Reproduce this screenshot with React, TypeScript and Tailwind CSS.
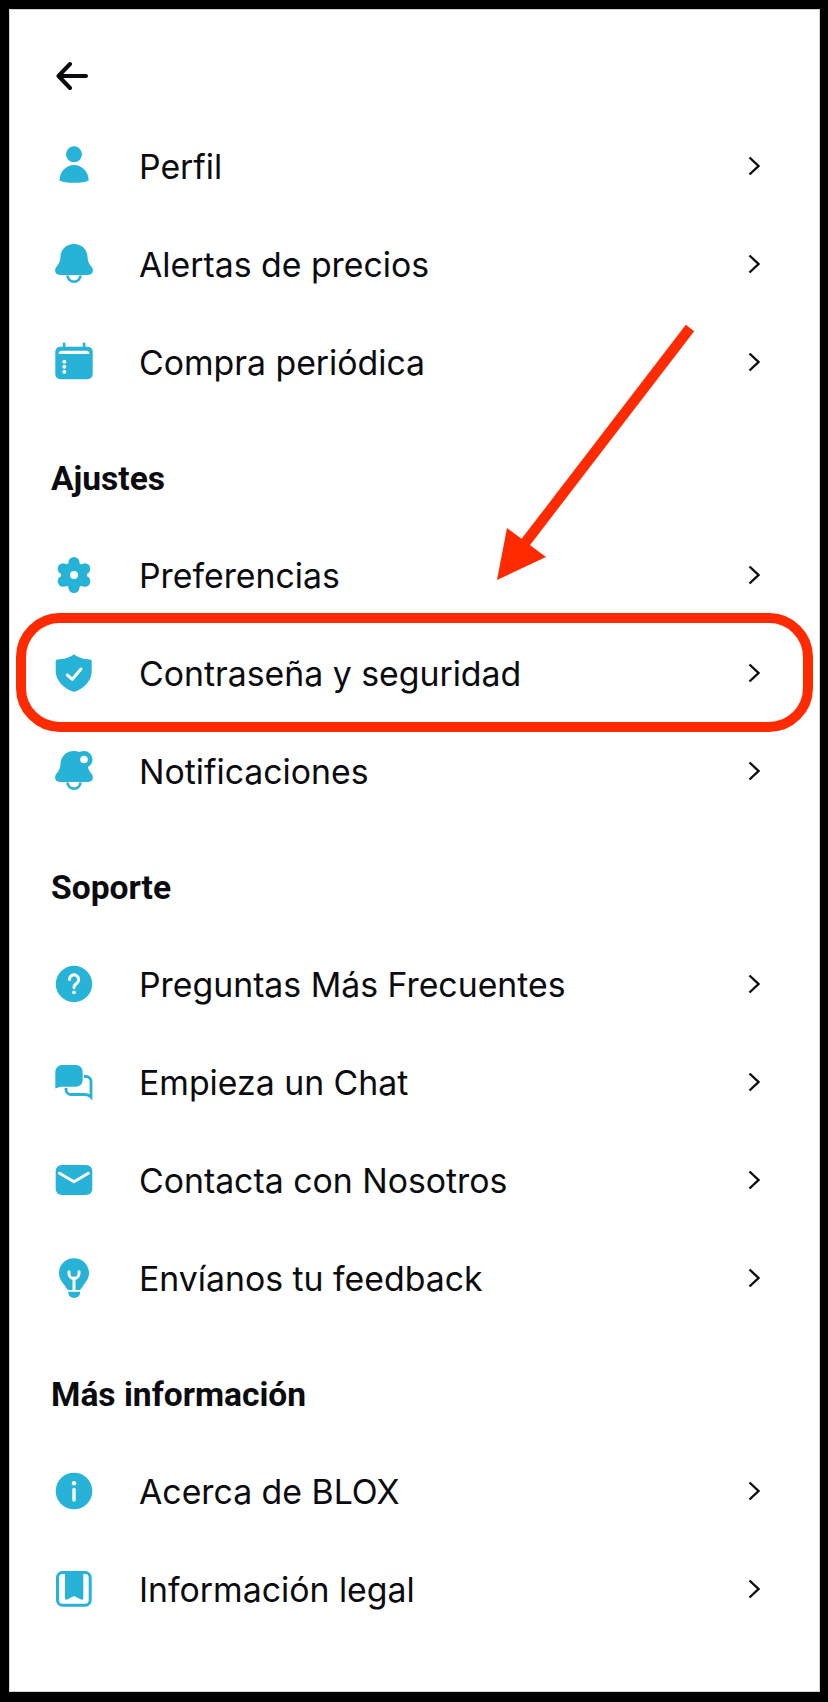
import React from 'react';

const BLUE = '#27b2d8';

const Bell = () => (
  <path d="M20 0C28 0 33 5.5 33.5 12.5C33.8 17 34.5 19 37 22C40.5 26 39 31 34 31L6 31C1 31 -0.5 26 3 22C5.5 19 6.2 17 6.5 12.5C7 5.5 12 0 20 0Z" fill={BLUE} />
);

const Clapper = () => (
  <path d="M13.5 31.5a6.5 6.2 0 0 0 13 0" fill="none" stroke={BLUE} strokeWidth="2.6" />
);

const gearLobes = [
  [20, 7.5],
  [30.8, 13.75],
  [30.8, 26.25],
  [20, 32.5],
  [9.2, 26.25],
  [9.2, 13.75],
];

const icons: Record<string, React.ReactNode> = {
  user: (
    <>
      <circle cx="20" cy="8.3" r="8" fill={BLUE} />
      <path d="M5.5 34.5C5.5 26 12 19 20 19S34.7 26 34.7 34.5C30 37.6 10 37.6 5.5 34.5Z" fill={BLUE} />
    </>
  ),
  bell: (
    <>
      <Bell />
      <Clapper />
    </>
  ),
  calendar: (
    <>
      <rect x="1.3" y="4.7" width="37.4" height="32.6" rx="5" fill={BLUE} />
      <rect x="8.8" y="0.7" width="2.6" height="6" fill={BLUE} />
      <rect x="28.8" y="0.7" width="2.6" height="6" fill={BLUE} />
      <path d="M4.7 12V11.5Q4.7 8.7 7.5 8.7H32.5Q35.3 8.7 35.3 11.5V12Z" fill="white" />
      <circle cx="10.3" cy="19.7" r="2" fill="white" />
      <circle cx="10.3" cy="24.7" r="2" fill="white" />
      <circle cx="10.3" cy="29.7" r="2" fill="white" />
    </>
  ),
  gear: (
    <>
      {gearLobes.map(([cx, cy]) => (
        <circle key={`${cx}-${cy}`} cx={cx} cy={cy} r="5.5" fill={BLUE} />
      ))}
      <circle cx="20" cy="20" r="13" fill={BLUE} />
      <circle cx="20" cy="20" r="4" fill="white" />
    </>
  ),
  shield: (
    <>
      <path d="M20 1.3C24 4.5 30 6.5 36 6.5Q37.7 6.5 37.7 8.5L37.7 18C37.7 28 30 35.5 20 39C10 35.5 1.7 28 1.7 18L1.7 8.5Q1.7 6.5 3.5 6.5C10 6.5 16 4.5 20 1.3Z" fill={BLUE} />
      <path d="M13.3 22L18.3 26.3L27 16" fill="none" stroke="white" strokeWidth="3" strokeLinecap="round" strokeLinejoin="round" />
    </>
  ),
  bellDot: (
    <>
      <Bell />
      <Clapper />
      <circle cx="30" cy="8.5" r="8.5" fill={BLUE} />
      <circle cx="30" cy="8.5" r="3.8" fill="white" />
    </>
  ),
  question: (
    <>
      <circle cx="20" cy="20" r="18.2" fill={BLUE} />
      <path d="M15.5 15.5a4.6 4.6 0 1 1 7.3 3.7c-1.7 1.2-2.8 2.2-2.8 4.3" fill="none" stroke="white" strokeWidth="3" strokeLinecap="round" />
      <circle cx="20" cy="28.3" r="1.9" fill="white" />
    </>
  ),
  chat: (
    <>
      <path d="M8 3H22A6.7 6.7 0 0 1 28.7 9.7V18A6.7 6.7 0 0 1 22 24.7H10C7 24.7 4 25 1.3 26.5V9.7A6.7 6.7 0 0 1 8 3Z" fill={BLUE} />
      <path d="M30 14.5H32A5 5 0 0 1 37 19.5V35C35 33 33 32.5 31 32.5H17A5 5 0 0 1 12 27.5V26" fill="none" stroke={BLUE} strokeWidth="2.8" />
    </>
  ),
  mail: (
    <>
      <rect x="1.7" y="5" width="36.6" height="30" rx="6" fill={BLUE} />
      <path d="M5.5 13.3L20 21.7L34.3 13.3" fill="none" stroke="white" strokeWidth="3" strokeLinecap="round" strokeLinejoin="round" />
    </>
  ),
  bulb: (
    <>
      <path d="M20 0.3C28.5 0.3 35 7 35 15C35 21 31.5 24 29 28C27.5 30.5 27 31 26 32H14C13 31 12.5 30.5 11 28C8.5 24 5 21 5 15C5 7 11.5 0.3 20 0.3Z" fill={BLUE} />
      <path d="M14.3 33.8H26V35A5.8 5 0 0 1 14.3 35Z" fill={BLUE} />
      <path d="M15 13.7V15.5A5 5 0 0 0 20 20.5A5 5 0 0 0 25 15.5V13.7M20 20V32" fill="none" stroke="white" strokeWidth="3" strokeLinecap="round" />
    </>
  ),
  info: (
    <>
      <circle cx="20" cy="20" r="18.3" fill={BLUE} />
      <circle cx="20" cy="12.3" r="2.2" fill="white" />
      <path d="M20 18.5V29" stroke="white" strokeWidth="3.4" strokeLinecap="round" />
    </>
  ),
  book: (
    <>
      <rect x="3.5" y="3.5" width="32.7" height="32.7" rx="5" fill="none" stroke={BLUE} strokeWidth="3" />
      <path d="M11 3H29.3V29Q29.3 31.5 27 30.5L20 27L13.3 30.5Q11 31.5 11 29Z" fill={BLUE} />
    </>
  ),
};

function Row({ icon, label }: { icon: string; label: string }) {
  return (
    <div className="flex h-[98px] items-center justify-between pl-[44px] pr-[59px]">
      <div className="flex items-center gap-[45px]">
        <svg width="40" height="40" viewBox="0 0 40 40" className="overflow-visible">
          {icons[icon]}
        </svg>
        <span className="pt-[2px] text-[33.8px] leading-[40px] text-[#0b0b10]">{label}</span>
      </div>
      <svg width="12" height="20" viewBox="0 0 12 20" fill="none">
        <path d="M1.5 1.5L10.5 10L1.5 18.5" stroke="#0b0b10" strokeWidth="2.4" />
      </svg>
    </div>
  );
}

function Section({ title, items }: { title?: string; items: [string, string][] }) {
  return (
    <section>
      {title && (
        <h2 className="flex h-[115px] items-start pl-[41px] pt-[48px] font-['Roboto',sans-serif] text-[33.6px] font-bold leading-[40px] text-[#0b0b10]">
          {title}
        </h2>
      )}
      {items.map(([icon, label]) => (
        <Row key={label} icon={icon} label={label} />
      ))}
    </section>
  );
}

export default function App() {
  return (
    <div className="relative min-h-[1702px] bg-black pb-[10px] pl-[9px] pr-[8px] pt-[9px] font-['Inter',sans-serif]">
      <div className="h-[1683px] overflow-hidden border border-[#d4d4d4] bg-white">
        <div className="h-[107px] pl-[46px] pt-[50px]">
          <svg width="32" height="32" viewBox="0 0 32 32" fill="none">
            <path d="M30 16H2.5M14 4L2.5 16L14 28" stroke="#0b0b10" strokeWidth="4" strokeLinecap="round" strokeLinejoin="round" />
          </svg>
        </div>
        <Section
          items={[
            ['user', 'Perfil'],
            ['bell', 'Alertas de precios'],
            ['calendar', 'Compra periódica'],
          ]}
        />
        <Section
          title="Ajustes"
          items={[
            ['gear', 'Preferencias'],
            ['shield', 'Contraseña y seguridad'],
            ['bellDot', 'Notificaciones'],
          ]}
        />
        <Section
          title="Soporte"
          items={[
            ['question', 'Preguntas Más Frecuentes'],
            ['chat', 'Empieza un Chat'],
            ['mail', 'Contacta con Nosotros'],
            ['bulb', 'Envíanos tu feedback'],
          ]}
        />
        <Section
          title="Más información"
          items={[
            ['info', 'Acerca de BLOX'],
            ['book', 'Información legal'],
          ]}
        />
      </div>

      {/* annotation over the page */}
      <div className="absolute left-[16px] top-[613px] h-[119px] w-[797px] rounded-[44px] border-[10px] border-[#ff2a00]" />
      <svg className="absolute left-0 top-0" width="828" height="700" viewBox="0 0 828 700">
        <path d="M690 328L525 543" stroke="#ff2a00" strokeWidth="10.5" />
        <path d="M497 580L507 528L546 557Z" fill="#ff2a00" />
      </svg>
    </div>
  );
}
